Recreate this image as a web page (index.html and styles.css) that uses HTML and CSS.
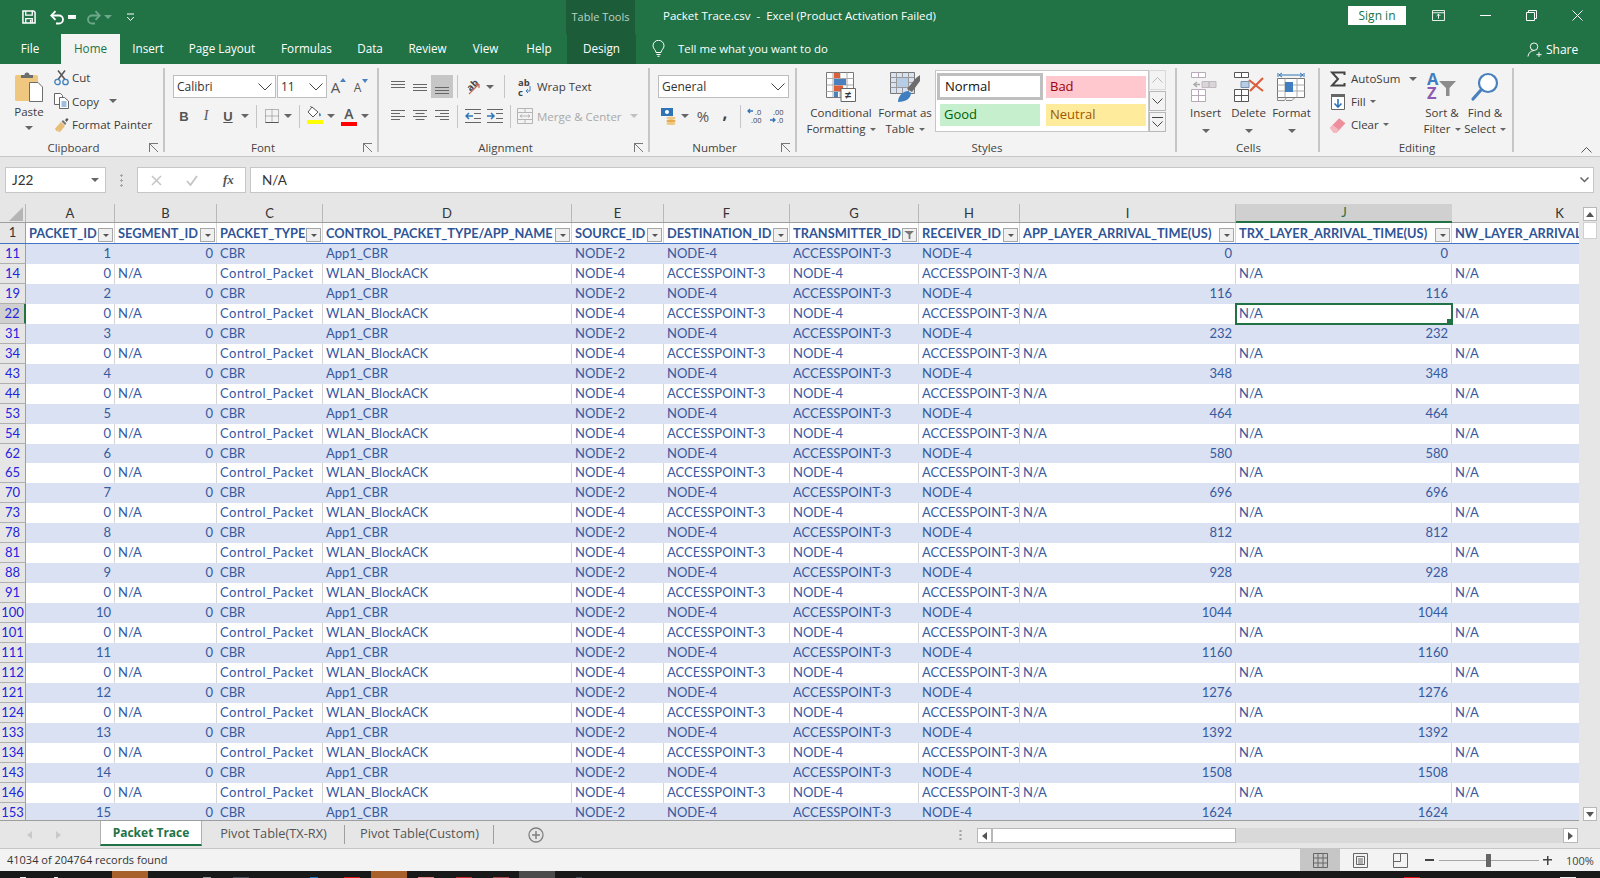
FILE: index.html
```html
<!DOCTYPE html>
<html lang="en">
<head>
<meta charset="utf-8">
<title>Packet Trace.csv - Excel</title>
<link rel="stylesheet" href="styles.css">
</head>
<body>
<div class="app">
  <header class="head">
    <div class="titlerow">
      <div class="qat">
        <svg class="q-save" viewBox="0 0 15 15"><path d="M1 1h11.5L14 2.500V14H1z" fill="none" stroke="#fff" stroke-width="1.600"/><path d="M4 1v4.500h7V1" fill="none" stroke="#fff" stroke-width="1.400"/><path d="M4 14V9.200h7V14" fill="none" stroke="#fff" stroke-width="1.400"/><path d="M8.500 10.500h1.500V14H8.500z" fill="#fff"/></svg>
        <svg class="q-undo" viewBox="0 0 15 15"><path d="M1.500 5.500H9a4 4 0 0 1 0 8H6" fill="none" stroke="#fff" stroke-width="1.800"/><path d="M5.500 1.200 1.300 5.500l4.200 4.300" fill="none" stroke="#fff" stroke-width="1.800"/></svg>
        <i class="caret white q-c1"></i>
        <svg class="q-redo" viewBox="0 0 15 15"><path d="M13.500 5.500H6a4 4 0 0 0 0 8h3" fill="none" stroke="#6fa78a" stroke-width="1.800"/><path d="M9.500 1.200l4.200 4.300-4.200 4.300" fill="none" stroke="#6fa78a" stroke-width="1.800"/></svg>
        <i class="caret dim q-c2"></i>
        <svg class="q-more" viewBox="0 0 9 9"><path d="M1 1h7" stroke="#fff" fill="none"/><path d="M1.200 4l3.300 3.500L7.800 4" stroke="#fff" fill="none"/></svg>
      </div>
      <div class="context">Table Tools</div>
      <div class="doc">Packet Trace.csv&nbsp; -&nbsp; Excel (Product Activation Failed)</div>
      <div class="signin">Sign in</div>
      <div class="winbtns">
        <svg viewBox="0 0 14 12" class="w-ribbon"><path d="M.5 .5h13v11H.5zM.5 3h13" fill="none" stroke="#fff"/><path d="M7 9.500V4.500M5 6.500l2-2 2 2" fill="none" stroke="#fff"/></svg>
        <svg viewBox="0 0 11 11" class="w-min"><path d="M0 5.500h11" stroke="#fff" fill="none"/></svg>
        <svg viewBox="0 0 11 11" class="w-max"><path d="M.5 2.500h8v8h-8zM2.500 2.500v-2h8v8h-2" stroke="#fff" fill="none"/></svg>
        <svg viewBox="0 0 11 11" class="w-close"><path d="M.5 .5l10 10M10.500 .5l-10 10" stroke="#fff" fill="none"/></svg>
      </div>
    </div>
    <nav class="tabrow">
      <a class="tab t-file">File</a>
      <a class="tab t-home on">Home</a>
      <a class="tab t-insert">Insert</a>
      <a class="tab t-layout">Page Layout</a>
      <a class="tab t-formulas">Formulas</a>
      <a class="tab t-data">Data</a>
      <a class="tab t-review">Review</a>
      <a class="tab t-view">View</a>
      <a class="tab t-help">Help</a>
      <a class="tab t-design">Design</a>
      <div class="tellme">
        <svg viewBox="0 0 13 17" class="bulb"><path d="M4 12.500C4 10 1 9 1 5.800a5.500 5.500 0 0 1 11 0C12 9 9 10 9 12.500zM4.500 14.500h4M5.500 16.300h2" fill="none" stroke="#fff"/></svg>
        <span>Tell me what you want to do</span>
      </div>
      <div class="share">
        <svg viewBox="0 0 16 16" class="share-i"><circle cx="7.500" cy="5" r="4" fill="none" stroke="#fff"/><path d="M1 15.500c.5-4 3-6 6.500-6.500M10 13.500h5.500M12.800 10.800v5.200" fill="none" stroke="#fff"/></svg>
        <span>Share</span>
      </div>
    </nav>
  </header>

  <section class="ribbon">
    <div class="group g-clip">
      <div class="gbody">
        <div class="paste">
          <svg viewBox="0 0 28 30" class="paste-i"><rect x="0" y="3" width="23" height="26" rx="1.500" fill="#efc77f"/><path d="M6 5V3h3.500a2.500 2.500 0 0 1 5 0H18v3H6z" fill="#6d6d6d"/><path d="M14.500 10.500H23l4.500 4.500v14.500h-13z" fill="#fff" stroke="#6d6d6d"/></svg>
          <span>Paste</span>
          <i class="caret"></i>
        </div>
        <div class="stack">
          <div class="srow"><svg viewBox="0 0 15 16" class="si"><path d="M4 9.500 11 .5M11 9.500 4 .5" stroke="#555" stroke-width="1.500" fill="none"/><circle cx="3.500" cy="12" r="2.700" fill="none" stroke="#3f7fbf" stroke-width="1.300"/><circle cx="11.500" cy="12" r="2.700" fill="none" stroke="#3f7fbf" stroke-width="1.300"/></svg><span>Cut</span></div>
          <div class="srow"><svg viewBox="0 0 15 16" class="si"><path d="M.5 .5h6l2 2v9h-8z" fill="#fff" stroke="#666"/><path d="M5.500 4.500h5l4 3.500v7.500h-9z" fill="#fff" stroke="#666"/><path d="M7.500 9h5M7.500 11h5M7.500 13h5" stroke="#3f7fbf"/></svg><span>Copy</span><i class="caret m-copy"></i></div>
          <div class="srow"><svg viewBox="0 0 15 16" class="si"><path d="M1 11.500 7 5l4 4-5 6H4l1-2-2.500 1.500z" fill="#e8bd78"/><path d="M7.500 4.500 9 3l3.500 3.500L11 8z" fill="#777"/><path d="M11 3l2-2 1.500 1.500-2 2.500z" fill="#555"/></svg><span>Format Painter</span></div>
        </div>
      </div>
      <div class="glabel lab">Clipboard<i class="launcher"></i></div>
    </div>

    <div class="group g-font">
      <div class="gbody col">
        <div class="row2">
          <div class="combo c-font"><span>Calibri</span><svg viewBox="0 0 14 8" class="chev"><path d="M.5 .5l6.500 6.500L13.500 .5" fill="none" stroke="#444"/></svg></div>
          <div class="combo c-size"><span>11</span><svg viewBox="0 0 14 8" class="chev"><path d="M.5 .5l6.500 6.500L13.500 .5" fill="none" stroke="#444"/></svg></div>
          <div class="slot s22"><span class="bigA">A</span><i class="tri up"></i></div>
          <div class="slot s22"><span class="bigA small">A</span><i class="tri down"></i></div>
        </div>
        <div class="row3">
          <div class="slot s22 fmt bold">B</div>
          <div class="slot s22 fmt ital">I</div>
          <div class="slot s22 fmt under">U</div>
          <div class="slot s12"><i class="caret"></i></div>
          <div class="slot s10"><i class="vsep"></i></div>
          <div class="slot s21"><svg viewBox="0 0 14 14" class="ic14"><path d="M.5 .5h13v13H.5zM7 .5v13M.5 7h13" fill="none" stroke="#777" stroke-dasharray="1 1"/><path d="M.5 13.500h13" stroke="#555"/></svg></div>
          <div class="slot s12"><i class="caret"></i></div>
          <div class="slot s10"><i class="vsep"></i></div>
          <div class="slot s22 colr"><svg viewBox="0 0 16 12" class="ic16"><path d="M5 1l6 5-5 5-5-5z" fill="#fff" stroke="#555"/><path d="M4.500 1.500 3.500 0" stroke="#555"/><path d="M12.500 6.500c1.500 1.800 2 3 .8 3.800s-1.800-1.500-.8-3.800z" fill="#3f7fbf"/></svg><b class="sw yellow"></b></div>
          <div class="slot s10"><i class="caret"></i></div>
          <div class="slot s2"></div>
          <div class="slot s22 colr"><span class="letA">A</span><b class="sw red"></b></div>
          <div class="slot s10"><i class="caret"></i></div>
        </div>
      </div>
      <div class="glabel lab">Font<i class="launcher"></i></div>
    </div>

    <div class="group g-align">
      <div class="gbody col">
        <div class="row2">
          <div class="slot s22"><svg viewBox="0 0 14 14" class="ic14"><path d="M0 1.500h14M0 4.500h14M0 7.500h14" stroke="#666" fill="none"/></svg></div>
          <div class="slot s22"><svg viewBox="0 0 14 14" class="ic14"><path d="M0 4.500h14M0 7.500h14M0 10.500h14" stroke="#666" fill="none"/></svg></div>
          <div class="slot s22 pressed"><svg viewBox="0 0 14 14" class="ic14"><path d="M0 7.500h14M0 10.500h14M0 13.500h14" stroke="#666" fill="none"/></svg></div>
          <div class="slot s8"><i class="vsep"></i></div>
          <div class="slot s22 m1"><svg viewBox="0 0 20 20" class="ic20"><text x="4" y="12" transform="rotate(-45 9 9)" class="abc">ab</text><path d="M6 17 16 7M16 7h-4M16 7v4" fill="none" stroke="#c26a5a" stroke-width="1.200"/></svg></div>
          <div class="slot s6"><i class="caret"></i></div>
          <div class="slot s24"><i class="vsep"></i></div>
          <div class="slot s22"><svg viewBox="0 0 16 24" class="ic16t"><text x="1" y="10.500" class="abc">ab</text><text x="1" y="20.500" class="abc">c</text><path d="M13 11v5H9m2-2-2 2 2 2" fill="none" stroke="#3f7fbf"/></svg></div>
          <span class="rtext">Wrap Text</span>
        </div>
        <div class="row3">
          <div class="slot s22"><svg viewBox="0 0 14 12" class="ic14"><path d="M0 .5h14M0 3.500h9M0 6.500h14M0 9.500h9" stroke="#666" fill="none"/></svg></div>
          <div class="slot s22"><svg viewBox="0 0 14 12" class="ic14"><path d="M0 .5h14M2.500 3.500h9M0 6.500h14M2.500 9.500h9" stroke="#666" fill="none"/></svg></div>
          <div class="slot s22"><svg viewBox="0 0 14 12" class="ic14"><path d="M0 .5h14M5 3.500h9M0 6.500h14M5 9.500h9" stroke="#666" fill="none"/></svg></div>
          <div class="slot s8"><i class="vsep"></i></div>
          <div class="slot s22 m1"><svg viewBox="0 0 16 14" class="ic16"><path d="M0 .5h16M0 13.500h16M9 4.500h7M9 9.500h7" stroke="#666" fill="none"/><path d="M8 7H1M4 4 1 7l3 3" stroke="#2f75b5" stroke-width="1.500" fill="none"/></svg></div>
          <div class="slot s22"><svg viewBox="0 0 16 14" class="ic16"><path d="M0 .5h16M0 13.500h16M9 4.500h7M9 9.500h7" stroke="#666" fill="none"/><path d="M0 7h7M4 4l3 3-3 3" stroke="#2f75b5" stroke-width="1.500" fill="none"/></svg></div>
          <div class="slot s8"><i class="vsep"></i></div>
          <div class="slot s22"><svg viewBox="0 0 16 16" class="ic16b"><path d="M.5 .5h15v15H.5zM.5 4.500h15M.5 11.500h15M8 .5v4M8 11.500v4M3 8h10M5 6.500 3 8l2 1.500M11 6.500 13 8l-2 1.500" fill="none" stroke="#b5b5b5"/></svg></div>
          <span class="rtext off">Merge &amp; Center</span>
          <i class="caret faded m-merge"></i>
        </div>
      </div>
      <div class="glabel lab">Alignment<i class="launcher"></i></div>
    </div>

    <div class="group g-num">
      <div class="gbody col">
        <div class="row2">
          <div class="combo c-num"><span>General</span><svg viewBox="0 0 14 8" class="chev"><path d="M.5 .5l6.500 6.500L13.500 .5" fill="none" stroke="#444"/></svg></div>
        </div>
        <div class="row3">
          <div class="slot s22"><svg viewBox="0 0 17 17" class="ic17"><rect x="0" y="0" width="12" height="8" fill="#2f75b5"/><circle cx="6" cy="4" r="2" fill="#fff"/><ellipse cx="10" cy="10" rx="4.500" ry="1.500" fill="#efc77f"/><ellipse cx="10" cy="13" rx="4.500" ry="1.500" fill="#e5a94e"/><ellipse cx="10" cy="15.500" rx="4.500" ry="1.500" fill="#efc77f"/></svg></div>
          <div class="slot s10"><i class="caret"></i></div>
          <div class="slot s2"></div>
          <div class="slot s22 pct">%</div>
          <div class="slot s22 pct comma">,</div>
          <div class="slot s8"><i class="vsep"></i></div>
          <div class="slot s22"><svg viewBox="0 0 18 18" class="ic18"><path d="M7 4H2M4 2 2 4l2 2" stroke="#2f75b5" stroke-width="1.300" fill="none"/><text x="9" y="8" class="dec">.0</text><text x="5" y="15.500" class="dec">.00</text></svg></div>
          <div class="slot s22"><svg viewBox="0 0 18 18" class="ic18"><text x="5" y="8" class="dec">.00</text><path d="M2 13h5M5 11l2 2-2 2" stroke="#2f75b5" stroke-width="1.300" fill="none"/><text x="9" y="15.500" class="dec">.0</text></svg></div>
        </div>
      </div>
      <div class="glabel lab">Number<i class="launcher"></i></div>
    </div>

    <div class="group g-styles">
      <div class="gbody">
        <div class="big b-cf">
          <svg viewBox="0 0 30 30" class="bigi"><path d="M.5 .5h27v25H.5z" fill="#fff" stroke="#777"/><path d="M7 .5v25M14 .5v25M21 .5v25M.5 6.500h27M.5 13h27M.5 19.500h27" stroke="#aaa" fill="none"/><rect x="8" y="1" width="6" height="5" fill="#d9603b"/><rect x="8" y="7" width="12" height="6" fill="#4a80bd"/><rect x="8" y="13.500" width="9" height="5.500" fill="#d9603b"/><rect x="8" y="20" width="4" height="5" fill="#4a80bd"/><path d="M15 16.500h14.500v13H15z" fill="#fff" stroke="#666"/><text x="22" y="27" class="ne">≠</text></svg>
          <span>Conditional</span>
          <span>Formatting<i class="caret inl"></i></span>
        </div>
        <div class="big b-ft">
          <svg viewBox="0 0 30 30" class="bigi"><path d="M.5 .5h24v21H.5z" fill="#d8e2f0" stroke="#777"/><path d="M6.500 .5v21M12.500 .5v21M18.500 .5v21M.5 5.500h24M.5 10.500h24M.5 15.500h24" stroke="#999" fill="none"/><rect x="7" y="6" width="11" height="9" fill="#b7cde5"/><path d="M17 17 26 6l4-3v6l-8 11z" fill="#6d6d6d"/><path d="M8 30c0-6 5-11 10-11l3 2c0 5-5 9-13 9z" fill="#3f7fbf"/></svg>
          <span>Format as</span>
          <span>Table<i class="caret inl"></i></span>
        </div>
        <div class="gallery">
          <div class="st normal">Normal</div>
          <div class="st bad">Bad</div>
          <div class="st good">Good</div>
          <div class="st neutral">Neutral</div>
        </div>
        <div class="gscroll">
          <div class="gs dimmed"><svg viewBox="0 0 11 6" class="gchev"><path d="M.5 5.500l5-5 5 5" fill="none" stroke="#bbb"/></svg></div>
          <div class="gs"><svg viewBox="0 0 11 6" class="gchev"><path d="M.5 .5l5 5 5-5" fill="none" stroke="#444"/></svg></div>
          <div class="gs more"><svg viewBox="0 0 11 10" class="gchev2"><path d="M0 .5h11M.5 4.500l5 5 5-5" fill="none" stroke="#444"/></svg></div>
        </div>
      </div>
      <div class="glabel">Styles</div>
    </div>

    <div class="group g-cells">
      <div class="gbody">
        <div class="big b-cell">
          <svg viewBox="0 0 30 30" class="bigi"><path d="M.5 .5h7v5h-7zM7.500 .5h7v5h-7zM.5 17.500h7v6h-7zM7.500 17.500h7v6h-7zM.5 23.500h7v6h-7zM7.500 23.500h7v6h-7z" fill="#fff" stroke="#b8a9b8"/><path d="M11 9.500h7v6h-7zM18 9.500h7v6h-7z" fill="#d9d5d9" stroke="#c0b8c0"/><path d="M9 12.500H3M6 10l-3 2.500L6 15" stroke="#aaa" stroke-width="1.500" fill="none"/></svg>
          <span>Insert</span><i class="caret blk"></i>
        </div>
        <div class="big b-cell">
          <svg viewBox="0 0 30 30" class="bigi"><path d="M.5 .5h7v5h-7zM7.500 .5h7v5h-7zM.5 17.500h7v6h-7zM7.500 17.500h7v6h-7zM.5 23.500h7v6h-7zM7.500 23.500h7v6h-7z" fill="#fff" stroke="#555"/><path d="M7 9.500h8v6H7z" fill="#b7cde5" stroke="#7a93ad"/><path d="M15 8l14 11M29 6 16 19" stroke="#d9603b" stroke-width="2.200" fill="none"/></svg>
          <span>Delete</span><i class="caret blk"></i>
        </div>
        <div class="big b-cell">
          <svg viewBox="0 0 30 30" class="bigi"><path d="M1 1v4M27 1v4M2 3h24M5 1 2 3l3 2M23 1l3 2-3 2" fill="none" stroke="#2f75b5"/><path d="M.5 6.500h27v19H.5z" fill="#fff" stroke="#777"/><path d="M8 6.500v19M20 6.500v19M.5 13h27M.5 19h27" stroke="#aaa" fill="none"/><rect x="8" y="10" width="8" height="10" fill="#3f7fbf"/><path d="M.5 25.500v3h7l2-3M9 28.500h6l3-3" fill="none" stroke="#888"/></svg>
          <span>Format</span><i class="caret blk"></i>
        </div>
      </div>
      <div class="glabel">Cells</div>
    </div>

    <div class="group g-edit">
      <div class="gbody">
        <div class="stack e-stack">
          <div class="srow"><svg viewBox="0 0 16 16" class="ei"><path d="M14.500 4V1.500H2L8 8l-6 6.500h12.500V12" fill="none" stroke="#444" stroke-width="2"/></svg><span>AutoSum</span><i class="caret m-sum"></i></div>
          <div class="srow"><svg viewBox="0 0 14 16" class="ei"><path d="M.5 .5h13v15H.5z" fill="#fff" stroke="#666"/><rect x="0" y="0" width="14" height="3" fill="#666"/><path d="M7 5v8M3.500 9.500 7 13l3.500-3.500" fill="none" stroke="#2f75b5" stroke-width="1.600"/></svg><span>Fill</span><i class="caret m-fill"></i></div>
          <div class="srow"><svg viewBox="0 0 14 14" class="ei"><path d="M0 9.500 8 1l5.500 4.500-7.500 8H3z" fill="#ee8d9b"/><path d="M0 9.500l2.500-2.500 5 4-1.500 2.500H3z" fill="#f4b8c0"/></svg><span>Clear</span><i class="caret m-fill"></i></div>
        </div>
        <div class="big b-sort">
          <svg viewBox="0 -5 30 40" class="sorti"><text x="0" y="13" class="az a">A</text><text x="0" y="27" class="az z">Z</text><path d="M12 9h17l-6.500 7v8h-3.500v-8z" fill="#8c8c8c"/></svg>
          <span>Sort &amp;</span>
          <span>Filter<i class="caret inl"></i></span>
        </div>
        <div class="big b-find">
          <svg viewBox="0 0 30 30" class="bigi"><circle cx="18" cy="11" r="9" fill="#fff" stroke="#4a80bd" stroke-width="2.200"/><path d="M11 18 3 27" stroke="#4a80bd" stroke-width="3.200" stroke-linecap="round"/></svg>
          <span>Find &amp;</span>
          <span>Select<i class="caret inl"></i></span>
        </div>
      </div>
      <div class="glabel">Editing</div>
    </div>
    <svg viewBox="0 0 11 6" class="collapse"><path d="M.5 5.500l5-5 5 5" fill="none" stroke="#555"/></svg>
  </section>

  <section class="fbar">
    <div class="namebox"><span>J22</span><i class="caret"></i></div>
    <div class="fdots"></div>
    <div class="fbtns">
      <svg viewBox="0 0 11 11" class="fb1"><path d="M1 1l9 9M10 1l-9 9" stroke="#c4c4c4" stroke-width="1.500" fill="none"/></svg>
      <svg viewBox="0 0 12 11" class="fb2"><path d="M1 6l3.500 4L11 1" stroke="#c4c4c4" stroke-width="1.800" fill="none"/></svg>
      <span class="fx">fx</span>
    </div>
    <div class="finput"><span>N/A</span><svg viewBox="0 0 9 6" class="fexp"><path d="M.5 .5l4 4 4-4" fill="none" stroke="#666" stroke-width="1.500"/></svg></div>
  </section>

  <section class="sheet">
    <div class="gridwrap">
      <div class="colhead line">
        <div class="ch corner"><svg viewBox="0 0 14 14" class="cornertri"><path d="M14 0v14H0z" fill="#b5b5b5"/></svg></div>
        <div class="ch">A</div><div class="ch">B</div><div class="ch">C</div><div class="ch">D</div><div class="ch">E</div><div class="ch">F</div><div class="ch">G</div><div class="ch">H</div><div class="ch">I</div><div class="ch active">J</div><div class="ch">K</div>
      </div>
      <div class="hrow line">
        <b class="rh first">1</b>
        <div class="hc"><span>PACKET_ID</span><i class="fbtn"></i></div>
        <div class="hc"><span>SEGMENT_ID</span><i class="fbtn"></i></div>
        <div class="hc"><span>PACKET_TYPE</span><i class="fbtn"></i></div>
        <div class="hc"><span>CONTROL_PACKET_TYPE/APP_NAME</span><i class="fbtn"></i></div>
        <div class="hc"><span>SOURCE_ID</span><i class="fbtn"></i></div>
        <div class="hc"><span>DESTINATION_ID</span><i class="fbtn"></i></div>
        <div class="hc"><span>TRANSMITTER_ID</span><i class="fbtn filtered"><svg viewBox="0 0 12 10" class="funnel"><path d="M0 0h11L7 4v5H5V4z" fill="#777"/></svg></i></div>
        <div class="hc"><span>RECEIVER_ID</span><i class="fbtn"></i></div>
        <div class="hc"><span>APP_LAYER_ARRIVAL_TIME(US)</span><i class="fbtn"></i></div>
        <div class="hc"><span>TRX_LAYER_ARRIVAL_TIME(US)</span><i class="fbtn"></i></div>
        <div class="hc last"><span>NW_LAYER_ARRIVAL_TIME(US)</span></div>
      </div>
      <div class="rows">
<div class="line band"><b class="rh">11</b><span class="n">1</span><span class="n">0</span><span>CBR</span><span>App1_CBR</span><span>NODE-2</span><span>NODE-4</span><span>ACCESSPOINT-3</span><span>NODE-4</span><span class="n">0</span><span class="n">0</span><span></span></div>
<div class="line"><b class="rh">14</b><span class="n">0</span><span>N/A</span><span class="cp">Control_Packet</span><span>WLAN_BlockACK</span><span>NODE-4</span><span>ACCESSPOINT-3</span><span>NODE-4</span><span>ACCESSPOINT-3</span><span>N/A</span><span>N/A</span><span>N/A</span></div>
<div class="line band"><b class="rh">19</b><span class="n">2</span><span class="n">0</span><span>CBR</span><span>App1_CBR</span><span>NODE-2</span><span>NODE-4</span><span>ACCESSPOINT-3</span><span>NODE-4</span><span class="n">116</span><span class="n">116</span><span></span></div>
<div class="line"><b class="rh cur">22</b><span class="n">0</span><span>N/A</span><span class="cp">Control_Packet</span><span>WLAN_BlockACK</span><span>NODE-4</span><span>ACCESSPOINT-3</span><span>NODE-4</span><span>ACCESSPOINT-3</span><span>N/A</span><span class="sel">N/A</span><span>N/A</span></div>
<div class="line band"><b class="rh">31</b><span class="n">3</span><span class="n">0</span><span>CBR</span><span>App1_CBR</span><span>NODE-2</span><span>NODE-4</span><span>ACCESSPOINT-3</span><span>NODE-4</span><span class="n">232</span><span class="n">232</span><span></span></div>
<div class="line"><b class="rh">34</b><span class="n">0</span><span>N/A</span><span class="cp">Control_Packet</span><span>WLAN_BlockACK</span><span>NODE-4</span><span>ACCESSPOINT-3</span><span>NODE-4</span><span>ACCESSPOINT-3</span><span>N/A</span><span>N/A</span><span>N/A</span></div>
<div class="line band"><b class="rh">43</b><span class="n">4</span><span class="n">0</span><span>CBR</span><span>App1_CBR</span><span>NODE-2</span><span>NODE-4</span><span>ACCESSPOINT-3</span><span>NODE-4</span><span class="n">348</span><span class="n">348</span><span></span></div>
<div class="line"><b class="rh">44</b><span class="n">0</span><span>N/A</span><span class="cp">Control_Packet</span><span>WLAN_BlockACK</span><span>NODE-4</span><span>ACCESSPOINT-3</span><span>NODE-4</span><span>ACCESSPOINT-3</span><span>N/A</span><span>N/A</span><span>N/A</span></div>
<div class="line band"><b class="rh">53</b><span class="n">5</span><span class="n">0</span><span>CBR</span><span>App1_CBR</span><span>NODE-2</span><span>NODE-4</span><span>ACCESSPOINT-3</span><span>NODE-4</span><span class="n">464</span><span class="n">464</span><span></span></div>
<div class="line"><b class="rh">54</b><span class="n">0</span><span>N/A</span><span class="cp">Control_Packet</span><span>WLAN_BlockACK</span><span>NODE-4</span><span>ACCESSPOINT-3</span><span>NODE-4</span><span>ACCESSPOINT-3</span><span>N/A</span><span>N/A</span><span>N/A</span></div>
<div class="line band"><b class="rh">62</b><span class="n">6</span><span class="n">0</span><span>CBR</span><span>App1_CBR</span><span>NODE-2</span><span>NODE-4</span><span>ACCESSPOINT-3</span><span>NODE-4</span><span class="n">580</span><span class="n">580</span><span></span></div>
<div class="line"><b class="rh">65</b><span class="n">0</span><span>N/A</span><span class="cp">Control_Packet</span><span>WLAN_BlockACK</span><span>NODE-4</span><span>ACCESSPOINT-3</span><span>NODE-4</span><span>ACCESSPOINT-3</span><span>N/A</span><span>N/A</span><span>N/A</span></div>
<div class="line band"><b class="rh">70</b><span class="n">7</span><span class="n">0</span><span>CBR</span><span>App1_CBR</span><span>NODE-2</span><span>NODE-4</span><span>ACCESSPOINT-3</span><span>NODE-4</span><span class="n">696</span><span class="n">696</span><span></span></div>
<div class="line"><b class="rh">73</b><span class="n">0</span><span>N/A</span><span class="cp">Control_Packet</span><span>WLAN_BlockACK</span><span>NODE-4</span><span>ACCESSPOINT-3</span><span>NODE-4</span><span>ACCESSPOINT-3</span><span>N/A</span><span>N/A</span><span>N/A</span></div>
<div class="line band"><b class="rh">78</b><span class="n">8</span><span class="n">0</span><span>CBR</span><span>App1_CBR</span><span>NODE-2</span><span>NODE-4</span><span>ACCESSPOINT-3</span><span>NODE-4</span><span class="n">812</span><span class="n">812</span><span></span></div>
<div class="line"><b class="rh">81</b><span class="n">0</span><span>N/A</span><span class="cp">Control_Packet</span><span>WLAN_BlockACK</span><span>NODE-4</span><span>ACCESSPOINT-3</span><span>NODE-4</span><span>ACCESSPOINT-3</span><span>N/A</span><span>N/A</span><span>N/A</span></div>
<div class="line band"><b class="rh">88</b><span class="n">9</span><span class="n">0</span><span>CBR</span><span>App1_CBR</span><span>NODE-2</span><span>NODE-4</span><span>ACCESSPOINT-3</span><span>NODE-4</span><span class="n">928</span><span class="n">928</span><span></span></div>
<div class="line"><b class="rh">91</b><span class="n">0</span><span>N/A</span><span class="cp">Control_Packet</span><span>WLAN_BlockACK</span><span>NODE-4</span><span>ACCESSPOINT-3</span><span>NODE-4</span><span>ACCESSPOINT-3</span><span>N/A</span><span>N/A</span><span>N/A</span></div>
<div class="line band"><b class="rh">100</b><span class="n">10</span><span class="n">0</span><span>CBR</span><span>App1_CBR</span><span>NODE-2</span><span>NODE-4</span><span>ACCESSPOINT-3</span><span>NODE-4</span><span class="n">1044</span><span class="n">1044</span><span></span></div>
<div class="line"><b class="rh">101</b><span class="n">0</span><span>N/A</span><span class="cp">Control_Packet</span><span>WLAN_BlockACK</span><span>NODE-4</span><span>ACCESSPOINT-3</span><span>NODE-4</span><span>ACCESSPOINT-3</span><span>N/A</span><span>N/A</span><span>N/A</span></div>
<div class="line band"><b class="rh">111</b><span class="n">11</span><span class="n">0</span><span>CBR</span><span>App1_CBR</span><span>NODE-2</span><span>NODE-4</span><span>ACCESSPOINT-3</span><span>NODE-4</span><span class="n">1160</span><span class="n">1160</span><span></span></div>
<div class="line"><b class="rh">112</b><span class="n">0</span><span>N/A</span><span class="cp">Control_Packet</span><span>WLAN_BlockACK</span><span>NODE-4</span><span>ACCESSPOINT-3</span><span>NODE-4</span><span>ACCESSPOINT-3</span><span>N/A</span><span>N/A</span><span>N/A</span></div>
<div class="line band"><b class="rh">121</b><span class="n">12</span><span class="n">0</span><span>CBR</span><span>App1_CBR</span><span>NODE-2</span><span>NODE-4</span><span>ACCESSPOINT-3</span><span>NODE-4</span><span class="n">1276</span><span class="n">1276</span><span></span></div>
<div class="line"><b class="rh">124</b><span class="n">0</span><span>N/A</span><span class="cp">Control_Packet</span><span>WLAN_BlockACK</span><span>NODE-4</span><span>ACCESSPOINT-3</span><span>NODE-4</span><span>ACCESSPOINT-3</span><span>N/A</span><span>N/A</span><span>N/A</span></div>
<div class="line band"><b class="rh">133</b><span class="n">13</span><span class="n">0</span><span>CBR</span><span>App1_CBR</span><span>NODE-2</span><span>NODE-4</span><span>ACCESSPOINT-3</span><span>NODE-4</span><span class="n">1392</span><span class="n">1392</span><span></span></div>
<div class="line"><b class="rh">134</b><span class="n">0</span><span>N/A</span><span class="cp">Control_Packet</span><span>WLAN_BlockACK</span><span>NODE-4</span><span>ACCESSPOINT-3</span><span>NODE-4</span><span>ACCESSPOINT-3</span><span>N/A</span><span>N/A</span><span>N/A</span></div>
<div class="line band"><b class="rh">143</b><span class="n">14</span><span class="n">0</span><span>CBR</span><span>App1_CBR</span><span>NODE-2</span><span>NODE-4</span><span>ACCESSPOINT-3</span><span>NODE-4</span><span class="n">1508</span><span class="n">1508</span><span></span></div>
<div class="line"><b class="rh">146</b><span class="n">0</span><span>N/A</span><span class="cp">Control_Packet</span><span>WLAN_BlockACK</span><span>NODE-4</span><span>ACCESSPOINT-3</span><span>NODE-4</span><span>ACCESSPOINT-3</span><span>N/A</span><span>N/A</span><span>N/A</span></div>
<div class="line band"><b class="rh">153</b><span class="n">15</span><span class="n">0</span><span>CBR</span><span>App1_CBR</span><span>NODE-2</span><span>NODE-4</span><span>ACCESSPOINT-3</span><span>NODE-4</span><span class="n">1624</span><span class="n">1624</span><span></span></div>
      </div>
    </div>
    <div class="vscroll">
      <div class="sbtn up"><i class="tri-s tu"></i></div>
      <div class="vthumb"></div>
      <div class="vtrack"></div>
      <div class="sbtn dn"><i class="tri-s td"></i></div>
    </div>
  </section>

  <section class="sheettabs">
    <div class="tabnav"><i class="tri-s tl faint"></i><i class="tri-s tr faint"></i></div>
    <div class="stab active">Packet Trace</div>
    <div class="stab s2w">Pivot Table(TX-RX)</div>
    <div class="stab s3w">Pivot Table(Custom)</div>
    <div class="addtab"><svg viewBox="0 0 16 16" class="plus"><circle cx="8" cy="8" r="7" fill="none" stroke="#808080" stroke-width="1.300"/><path d="M8 4v8M4 8h8" stroke="#808080" stroke-width="1.500"/></svg></div>
    <div class="hdots"></div>
    <div class="hscroll">
      <div class="hbtn"><i class="tri-s tl"></i></div>
      <div class="hthumb"></div>
      <div class="htrack"></div>
      <div class="hbtn"><i class="tri-s tr"></i></div>
    </div>
  </section>

  <footer class="status">
    <span class="records">41034 of 204764 records found</span>
    <div class="views">
      <div class="vw on"><svg viewBox="0 0 15 15" class="vi"><path d="M.5 .5h14v14H.5zM5 .5v14M10 .5v14M.5 5h14M.5 10h14" fill="none" stroke="#666"/></svg></div>
      <div class="vw"><svg viewBox="0 0 15 15" class="vi"><path d="M.5 .5h14v14H.5z" fill="none" stroke="#666"/><path d="M3.500 3.500h8v8h-8zM5 6h5M5 8h5M5 10h5" fill="none" stroke="#666"/></svg></div>
      <div class="vw"><svg viewBox="0 0 15 15" class="vi"><path d="M.5 .5h14v14H.5zM7.500 .5v8H.5" fill="none" stroke="#666"/></svg></div>
    </div>
    <div class="zoom">
      <span class="zm"></span>
      <div class="zline"><i class="zthumb"></i></div>
      <span class="zp"></span>
    </div>
    <span class="pctz">100%</span>
  </footer>

  <div class="taskbar">
    <i class="tb w6 a1 white"></i><i class="tb w4 a2 white"></i><i class="tb w8 a3 grey"></i>
    <i class="tb w36 full a4 brown"></i><i class="tb w6 a5 grey"></i><i class="tb w16 a6 slate"></i><i class="tb w8 a7 blue"></i>
    <i class="tb w16 a8 red"></i><i class="tb w36 full a9 brown2"></i><i class="tb w16 a10 pink"></i><i class="tb w16 a11 red2"></i><i class="tb w16 a12 rose"></i>
    <i class="tb w36 full a13 greybox"></i><i class="tb w6 a14 slate"></i><i class="tb w16 a15 red"></i><i class="tb w16 a16 white"></i>
  </div>
</div>
</body>
</html>
```

FILE: styles.css
```css
*{box-sizing:border-box;margin:0;padding:0}
html,body{width:1600px;height:878px;overflow:hidden;background:#e6e6e6}
body{font-family:"Open Sans","Noto Sans",sans-serif;font-size:11.5px;color:#3c3c3c}
svg{display:block;flex:none}
i{display:block;font-style:normal}
.app{width:1600px;height:878px;display:flex;flex-direction:column}

/* title */
.head{background:#217346;color:#fff;flex:none}
.titlerow{height:34px;display:flex;align-items:stretch}
.qat{width:566px;display:flex;align-items:center;padding-left:22px;flex:none}
.q-save{width:14px;height:14px}
.q-undo{width:15px;height:15px;margin-left:14px}
.q-c1{margin-left:3px}
.q-redo{width:15px;height:15px;margin-left:10px}
.q-c2{margin-left:3px}
.q-more{width:9px;height:9px;margin-left:14px}
.context{width:69px;flex:none;background:#1c5c39;color:#bcd3c6;text-align:center;line-height:33px;font-size:11px}
.doc{width:713px;flex:none;padding-left:28px;line-height:32px;font-size:11.5px;white-space:nowrap}
.signin{width:58px;flex:none;height:19px;margin-top:6px;background:#fff;color:#217346;text-align:center;line-height:19px;font-size:12px}
.winbtns{flex:1;display:flex;align-items:center;padding:0 0 4px 26px}
.w-ribbon{width:13px;height:11px}
.w-min{width:11px;height:11px;margin-left:35px}
.w-max{width:11px;height:11px;margin-left:35px}
.w-close{width:11px;height:11px;margin-left:35px}
.tabrow{height:30px;display:flex;align-items:stretch}
.tab{display:block;flex:none;text-align:center;line-height:29px;font-size:11.700px;color:#fff;white-space:nowrap}
.t-file{width:60px}.t-home{width:59px;margin-left:1px}.t-insert{width:56px}.t-layout{width:92px}
.t-formulas{width:77px}.t-data{width:50px}.t-review{width:65px}.t-view{width:51px}.t-help{width:56px}
.t-design{width:69px;background:#1c5c39}
.tab.on{background:#f3f3f3;color:#217346}
.tellme{display:flex;flex:none;align-items:center;gap:13px;padding:0 0 2px 16px;width:891px;font-size:11.400px}
.bulb{width:13px;height:17px}
.share{display:flex;align-items:center;gap:4px;font-size:12px}
.share-i{width:15px;height:15px}

/* ribbon */
.ribbon{height:93px;flex:none;background:#f3f3f3;border-bottom:1px solid #c6c6c6;display:flex;padding-top:2px;position:relative}
.group{height:88px;display:flex;flex-direction:column;background:linear-gradient(#c6c6c6,#c6c6c6) right center/2px 84px no-repeat;flex:none;position:relative}
.gbody{flex:1;display:flex;min-height:0}
.gbody.col{flex-direction:column;padding:9px 0 0 8px}
.glabel{height:16px;line-height:20px;text-align:center;font-size:11.500px;position:relative;color:#444}
.glabel.lab{padding-right:18px}
.launcher{position:absolute;right:7px;top:5px;width:9px;height:9px;border-left:1px solid #777;border-top:1px solid #777;background:linear-gradient(45deg,transparent 45%,#777 45%,#777 55%,transparent 55%)}
.g-clip{width:165px}.g-font{width:214px}.g-align{width:271px}.g-num{width:147px}.g-styles{width:380px}.g-cells{width:143px}.g-edit{width:194px}
.caret{width:0;height:0;border:4px solid transparent;border-top-color:#666;border-bottom:0;flex:none}
.caret.white{border-top-color:#fff}
.caret.dim{border-top-color:#6fa78a}
.caret.faded{border-top-color:#c0c0c0}
.caret.inl{display:inline-block;margin-left:4px;vertical-align:2px;border-width:3.500px;border-bottom:0}
.paste{width:50px;margin-left:4px;display:flex;flex-direction:column;align-items:center;padding-top:6px}
.paste-i{width:28px;height:30px}
.paste span{margin-top:2px;line-height:16px}
.paste .caret{margin-top:6px}
.stack{display:flex;flex-direction:column}
.srow{display:flex;align-items:center;height:23.500px;white-space:nowrap}
.si{width:15px;height:16px;margin-right:3px}
.m-copy{margin-left:10px}
.row2{height:23px;display:flex;align-items:center}
.row3{height:24px;margin-top:6px;display:flex;align-items:center}
.combo{height:23px;background:#fff;border:1px solid #bdbdbd;display:flex;align-items:center;justify-content:space-between;padding:0 3px;flex:none;white-space:nowrap;color:#333;font-size:12px}
.chev{width:14px;height:8px}
.c-font{width:103px}.c-size{width:50px;margin-left:1px}.c-num{width:131px}
.slot{height:23px;display:flex;align-items:center;justify-content:center;flex:none;position:relative}
.s2{width:2px}.s6{width:6px}.s8{width:8px}.s10{width:10px}.s12{width:12px}.s21{width:21px}.s22{width:22px}.s24{width:24px}
.s6 .caret{margin-right:-6px}
.vsep{width:1px;height:23px;background:#c6c6c6}
.s24 .vsep{margin-left:4px}
.pressed{background:#c6c6c6}
.m1{margin-left:1px}
.ic14{width:14px;height:14px}
.ic16{width:16px;height:14px}
.ic16b{width:16px;height:16px}
.ic16t{width:16px;height:24px}
.ic17{width:17px;height:17px}
.ic18{width:18px;height:18px}
.ic20{width:20px;height:20px}
.fmt{font-family:"Liberation Serif",serif;font-size:14px;color:#555}
.bold{font-family:"Liberation Sans",sans-serif;font-weight:700;font-size:13px}
.ital{font-style:italic;font-family:"Liberation Serif",serif}
.under{font-family:"Liberation Sans",sans-serif;font-weight:700;text-decoration:underline;font-size:13px}
.bigA{font-size:15px;line-height:20px;color:#555;margin-left:-5px}
.bigA.small{font-size:12px;margin-top:3px}
.tri{position:absolute;width:0;height:0;border:3px solid transparent;right:3px}
.tri.up{top:3px;border-top:0;border-bottom:4px solid #4a80bd}
.tri.down{top:4px;border-bottom:0;border-top:4px solid #4a80bd}
.colr{flex-direction:column;justify-content:flex-start}
.sw{display:block;width:16px;height:4px;margin-top:1px}
.yellow{background:#ff0}.red{background:#f00}
.letA{font-size:14px;line-height:18px;font-weight:600;color:#555;height:18px;margin-bottom:-2px}
.abc{font:700 9.500px "Open Sans",sans-serif;fill:#444}
.rtext{white-space:nowrap;margin-left:1px}
.off{color:#a9a9a9}
.m-merge{margin-left:8px}
.pct{font-size:15px;color:#555}
.comma{font-weight:700;font-size:17px;line-height:17px;padding-bottom:8px;color:#444}
.dec{font:7.500px "Open Sans",sans-serif;fill:#444}

.big{display:flex;flex-direction:column;align-items:center;padding-top:6px;flex:none;line-height:16px;white-space:nowrap}
.bigi{width:30px;height:30px;margin-bottom:3px}
.sorti{width:30px;height:40px;margin:-5px 0 -2px}
.big .blk{margin-top:8px}
.b-cf{width:68px;margin-left:10px}
.b-ft{width:60px}
.gallery{width:214px;height:62px;margin-top:4px;background:#fff;border:1px solid #c6c6c6;display:grid;grid-template-columns:106px 100px;column-gap:3px;grid-template-rows:27px 22px;row-gap:4px;padding:2px 0 0 1px;flex:none;font-size:13px}
.st{display:flex;align-items:center;padding:0 0 2px 4px}
.normal{border:3px solid #bfbfbf;color:#111;padding:0 0 1px 5px}
.bad{background:#ffc7ce;color:#9c0006;height:22px;margin-top:3px}
.good{background:#c6efce;color:#006100;margin-left:3px;width:100px}
.neutral{background:#ffeb9c;color:#9c5700}
.gscroll{margin-top:4px;width:17px;height:62px;display:flex;flex-direction:column;gap:1px;flex:none}
.gs{flex:1;border:1px solid #b8b8b8;background:#f3f3f3;display:flex;align-items:center;justify-content:center}
.dimmed{border-color:#d9d9d9}
.gchev{width:11px;height:6px}
.gchev2{width:11px;height:10px}
.g-cells .gbody{padding-left:7px}
.b-cell{width:43px}
.g-edit .gbody{padding-left:10px}
.e-stack{width:90px;padding-top:1px}
.e-stack .srow{height:23px}
.ei{width:16px;height:16px;margin-right:5px}
.m-sum{margin-left:9px}
.m-fill{margin-left:4px}
.srow .m-fill{border-width:3.500px;border-bottom:0}
.b-sort{width:44px}
.b-find{width:42px}
.az{font:700 16.500px "Open Sans",sans-serif}
.a{fill:#3f7fbf}.z{fill:#8e5bb0}
.ne{font:700 11px "Liberation Sans",sans-serif;fill:#333;text-anchor:middle}
.collapse{position:absolute;right:8px;bottom:3px;width:11px;height:6px}

/* formula bar */
.fbar{height:47px;flex:none;background:#e6e6e6;display:flex;padding:10px 6px 0 5px;align-items:flex-start}
.namebox,.fbtns,.finput{height:26px;background:#fff;border:1px solid #c6c6c6;display:flex;align-items:center;font-family:"Lato",sans-serif;font-size:13.500px;color:#333;flex:none}
.namebox{width:101px;padding:0 6px;justify-content:space-between}
.fdots{width:31px;height:14px;margin-top:6px;flex:none;background:radial-gradient(circle,#a5a5a5 1px,transparent 1.300px) center top/3px 5px repeat-y}
.fbtns{width:109px;justify-content:flex-start;padding-left:13px}
.fb1{width:11px;height:11px}
.fb2{width:12px;height:11px;margin-left:24px}
.fx{font:italic 700 13px "Liberation Serif",serif;margin-left:25px;color:#555}
.finput{flex:1;margin-left:4px;padding:0 4px 0 11px;justify-content:space-between}
.fexp{width:9px;height:6px}

/* sheet */
.sheet{height:617px;flex:none;display:flex;background:#e6e6e6}
.gridwrap{width:1579px;height:617px;overflow:hidden;flex:none;font-family:"Lato",sans-serif;font-size:13px;border-bottom:1px solid #9e9e9e;--cols:26px 89px 102px 106px 249px 92px 126px 129px 101px 216px 216px 216px}
.line{display:grid;grid-template-columns:var(--cols)}
.colhead{height:19px;border-bottom:1px solid #9e9e9e;background:#e6e6e6}
.ch{text-align:center;line-height:18px;color:#333;border-right:1px solid #b8b8b8;height:18px}
.corner{position:relative;border-right:1px solid #b8b8b8}
.cornertri{position:absolute;right:2px;bottom:1px;width:14px;height:14px}
.active{background:#d0d0d0;color:#217346;border-bottom:2px solid #217346;height:19px;border-right:0;line-height:17px}
.hrow{height:21px;background:#fff;border-bottom:1.500px solid #4472c4;color:#2f5597;font-weight:700;font-size:12.800px}
.hc{display:flex;align-items:flex-end;overflow:hidden;padding-left:3px;border-right:1px solid #d4d4d4;white-space:nowrap;min-width:0}
.hc span{flex:1;min-width:0;overflow:hidden;line-height:20px;align-self:flex-start}
.hc.last{border-right:0}
.fbtn{width:15px;height:14px;margin:0 1px 1px 0;background:#f0f0f0;border:1px solid #a6a6a6;flex:none;position:relative;display:flex;align-items:center;justify-content:center}
.fbtn::before{content:"";border:3.500px solid transparent;border-top-color:#555;border-bottom:0}
.fbtn.filtered::before{display:none}
.funnel{width:11px;height:9px}
.rh{background:#e6e6e6;color:#2323e0;font-weight:400;font-size:13px;text-align:center;border-right:1px solid #9e9e9e;border-bottom:1px solid #b0b0b0;line-height:19px;height:100%;display:block}
.rh.first{color:#333;line-height:19px;border-bottom:0}
.rh.cur{background:#d0d0d0;border-right:2px solid #217346;color:#2323e0}
.rows{height:577px;overflow:hidden}
.rows .line{height:19.960px;background:#fff;color:#37599f;line-height:19px}
.rows .band{background:#d9e1f2}
.rows span{overflow:hidden;white-space:nowrap;padding:0 3px;min-width:0;border-right:1px solid #d4d4d4}
.rows .band span{border-right-color:transparent}
.rows span:last-child{border-right:0}
.rows .cp{letter-spacing:.5px}
.n{text-align:right}
.sel{position:relative;overflow:visible!important;z-index:2}
.sel::after{content:"";position:absolute;left:-1px;right:-2px;top:-1px;bottom:-1px;border:2px solid #217346;background:linear-gradient(#217346,#217346) right -1px bottom -1px/5px 5px no-repeat}

.vscroll{flex:1;display:flex;flex-direction:column;padding:3px 3px 0 4px;background:#e6e6e6}
.sbtn{height:14px;background:#fff;border:1px solid #b8b8b8;display:flex;align-items:center;justify-content:center;flex:none}
.up{margin-bottom:1px}
.vthumb{height:17px;background:#fff;border:1px solid #d0d0d0;flex:none}
.vtrack{flex:1}
.tri-s{width:0;height:0;border:4px solid transparent;flex:none}
.tu{border-top:0;border-bottom:5px solid #555}
.td{border-bottom:0;border-top:5px solid #555}
.tl{border-left:0;border-right:5px solid #555}
.tr{border-right:0;border-left:5px solid #555}
.faint.tl{border-right-color:#c9c9c9}
.faint.tr{border-left-color:#c9c9c9}

/* tabs */
.sheettabs{height:28px;flex:none;display:flex;align-items:flex-start;background:#e6e6e6;font-size:12.800px;border-bottom:1px solid #c6c6c6}
.tabnav{width:100px;flex:none;height:27px;display:flex;align-items:center;gap:24px;padding-left:27px}
.stab{height:25px;line-height:24px;text-align:center;color:#555;white-space:nowrap;position:relative;flex:none}
.stab.active{width:102px;background:#fff;color:#217346;font-weight:700;border-bottom:2px solid #217346;font-size:12px;border-left:1px solid #b0b0b0;border-right:1px solid #b0b0b0}
.s2w{width:143px;background:linear-gradient(#9e9e9e,#9e9e9e) right 4px/1px 19px no-repeat}
.s3w{width:149px;background:linear-gradient(#9e9e9e,#9e9e9e) right 4px/1px 19px no-repeat}
.addtab{width:84px;flex:none;height:27px;display:flex;align-items:center;justify-content:center}
.plus{width:16px;height:16px}
.hdots{width:399px;flex:none;height:12px;margin-top:8px;background:radial-gradient(circle,#a5a5a5 1px,transparent 1.300px) 381px 0/3px 4px repeat-y}
.hscroll{width:601px;height:15px;margin-top:7px;display:flex;background:#d9d9d9;flex:none}
.hbtn{width:15px;height:15px;background:#fff;border:1px solid #b8b8b8;display:flex;align-items:center;justify-content:center;flex:none}
.hthumb{width:244px;background:#fff;border:1px solid #b8b8b8;flex:none}
.htrack{flex:1}

/* status */
.status{height:22px;flex:none;background:#f3f3f3;display:flex;align-items:center;font-size:11px;color:#333}
.records{width:1300px;flex:none;padding:0 0 2px 7px;white-space:nowrap}
.views{display:flex;height:22px;flex:none}
.vw{width:40px;display:flex;align-items:center;justify-content:center}
.vw.on{background:#c6c6c6}
.vi{width:15px;height:15px}
.zoom{display:flex;align-items:center;margin-left:5px;flex:none}
.zm{width:9px;height:2px;background:#444;margin-right:5px}
.zline{width:100px;height:1px;background:#a6a6a6;position:relative}
.zthumb{position:absolute;left:47px;top:-6px;width:5px;height:13px;background:#666}
.zp{width:9px;height:9px;margin-left:4px;background:linear-gradient(#444,#444) center/9px 1.500px no-repeat,linear-gradient(#444,#444) center/1.500px 9px no-repeat}
.pctz{margin-left:14px;font-size:11px;color:#444;white-space:nowrap}

/* taskbar */
.taskbar{height:8px;flex:none;background:#191919;position:relative}
.tb{position:absolute;bottom:0;height:2px}
.full{height:8px;top:0}
.w4{width:4px}.w6{width:6px}.w8{width:8px}.w16{width:16px}.w36{width:36px}
.white{background:#eee}.grey{background:#9a9a9a}.slate{background:#4a4f55}.blue{background:#1d78c4}.brown{background:#a8612a}.brown2{background:#a8612a}
.red2{background:#c0302c}.pink{background:#e58a8a}.rose{background:#a84a4a}.greybox{background:#4c4c4c}
.taskbar .red{background:#e01010}
.a1{left:20px}.a2{left:54px}.a3{left:203px}.a4{left:112px}.a5{left:203px}.a6{left:233px}.a7{left:310px}.a8{left:344px}.a9{left:371px}.a10{left:418px}.a11{left:456px}.a12{left:493px}.a13{left:519px}.a14{left:576px}.a15{left:1404px}.a16{left:1560px}
```
